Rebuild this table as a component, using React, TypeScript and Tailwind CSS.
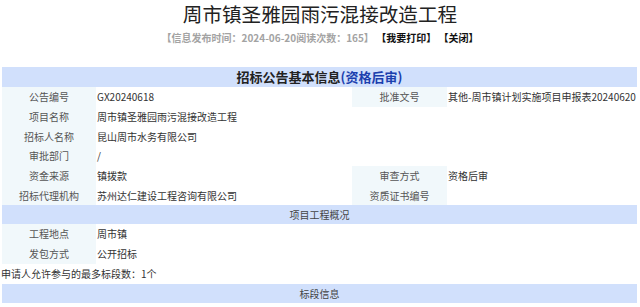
const rows1: { label: string; value: string; label2?: string; value2?: string }[] = [
  { label: "公告编号", value: "GX20240618", label2: "批准文号", value2: "其他-周市镇计划实施项目申报表20240620" },
  { label: "项目名称", value: "周市镇圣雅园雨污混接改造工程" },
  { label: "招标人名称", value: "昆山周市水务有限公司" },
  { label: "审批部门", value: "/" },
  { label: "资金来源", value: "镇拨款", label2: "审查方式", value2: "资格后审" },
  { label: "招标代理机构", value: "苏州达仁建设工程咨询有限公司", label2: "资质证书编号", value2: "" },
];

const rows2 = [
  { label: "工程地点", value: "周市镇" },
  { label: "发包方式", value: "公开招标" },
];

function Label({ text }: { text: string }) {
  return (
    <div className="h-[19.67px] flex items-center justify-center bg-[#f1f8fb] text-[#555]">{text}</div>
  );
}

function Value({ text, wide }: { text: string; wide?: boolean }) {
  return (
    <div className={wide ? "col-span-3 h-[19.67px] flex items-center pl-[1px] text-[#333]" : "h-[19.67px] flex items-center pl-[1px] text-[#333]"}>
      {text}
    </div>
  );
}

export default function App() {
  return (
    <div className="w-[640px] h-[307px] overflow-hidden bg-white font-['Noto_Sans_CJK_SC',sans-serif] text-[10px]">
      <h1 className="h-[28px] leading-[28px] text-center text-[19.6px] font-normal text-[#222]">
        周市镇圣雅园雨污混接改造工程
      </h1>
      <div className="mt-[3px] h-[14px] leading-[14px] text-center font-bold">
        <span className="text-[#a3a3a3]">【信息发布时间：2024-06-20阅读次数：165】</span>{" "}
        <span className="text-[#111]">【我要打印】</span>{" "}
        <span className="text-[#111]">【关闭】</span>
      </div>

      <div className="ml-[2px] w-[635px] mt-[22px]">
        <div className="h-[20px] flex items-center justify-center bg-[#d1e0fc] text-[13px] font-bold text-[#222]">
          招标公告基本信息<span className="text-[#1b3fae]">(资格后审)</span>
        </div>
        <div className="grid grid-cols-[94px_256px_95px_190px]">
          {rows1.map((r) =>
            r.label2 !== undefined ? (
              <div key={r.label} className="contents">
                <Label text={r.label} />
                <Value text={r.value} />
                <Label text={r.label2} />
                <Value text={r.value2 ?? ""} />
              </div>
            ) : (
              <div key={r.label} className="contents">
                <Label text={r.label} />
                <Value text={r.value} wide />
              </div>
            )
          )}
        </div>

        <div className="h-[19px] flex items-center justify-center bg-[#d1e0fc] text-[#444]">项目工程概况</div>
        <div className="grid grid-cols-[94px_256px_95px_190px]">
          {rows2.map((r) => (
            <div key={r.label} className="contents">
              <div className="h-[20px] flex items-center justify-center bg-[#f1f8fb] text-[#555]">{r.label}</div>
              <div className="col-span-3 h-[20px] flex items-center pl-[1px] text-[#333]">{r.value}</div>
            </div>
          ))}
        </div>
        <div className="h-[20px] flex items-center -ml-[1px] text-[#333]">申请人允许参与的最多标段数：1个</div>
        <div className="h-[19px] flex items-center justify-center bg-[#d1e0fc] text-[#444]">标段信息</div>
      </div>
    </div>
  );
}
